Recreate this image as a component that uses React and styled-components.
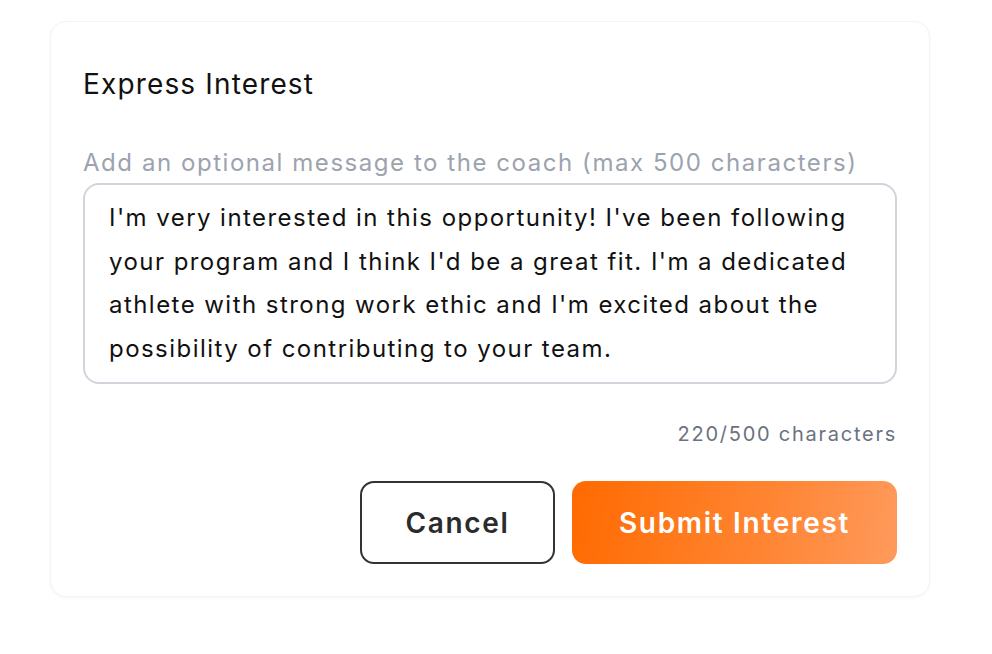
import React from "react";
import styled, { createGlobalStyle } from "styled-components";

const Global = createGlobalStyle`
  html, body { margin: 0; padding: 0; background: #ffffff; }
  body { font-family: Inter, "Noto Sans", sans-serif; -webkit-font-smoothing: antialiased; }
  * { box-sizing: border-box; }
`;

const Page = styled.div`
  padding: 21px 62px 56px 50px;
`;

const Card = styled.div`
  width: 880px;
  background: #ffffff;
  border: 1px solid #f3f4f6;
  border-radius: 16px;
  box-shadow: 0 1px 3px rgba(0, 0, 0, 0.04);
  padding: 44px 32px 32px 32px;
  display: flex;
  flex-direction: column;
`;

const Title = styled.h2`
  margin: 0;
  font-size: 28px;
  font-weight: 400;
  color: #111111;
  line-height: 36px;
  letter-spacing: 1.15px;
`;

const Label = styled.label`
  margin-top: 45px;
  font-size: 24px;
  color: #9ca3af;
  line-height: 32px;
  letter-spacing: 1.55px;
`;

const TextArea = styled.div`
  margin-top: 4px;
  border: 2px solid #d1d5db;
  border-radius: 16px;
  padding: 11px 24px 12px 24px;
  font-size: 24px;
  line-height: 43.5px;
  color: #111111;
  letter-spacing: 1.45px;
  height: 201px;
`;

const Counter = styled.div`
  margin-top: 36px;
  text-align: right;
  font-size: 20px;
  color: #6b7280;
  line-height: 28px;
  letter-spacing: 1.75px;
`;

const Actions = styled.div`
  margin-top: 33px;
  display: flex;
  justify-content: flex-end;
  gap: 17px;
`;

const Button = styled.button`
  height: 83px;
  border-radius: 14px;
  font-family: Inter, "Noto Sans", sans-serif;
  font-size: 28px;
  font-weight: 600;
  cursor: pointer;
  padding: 0;
  letter-spacing: 1.7px;
  width: ${(p) => p.$width}px;
  ${(p) =>
    p.$primary
      ? `
    border: none;
    color: #ffffff;
    background: linear-gradient(100deg, #ff6a00 0%, #ff8533 60%, #ff9a5c 100%);
  `
      : `
    border: 2px solid #333333;
    color: #2b2b2b;
    background: #ffffff;
  `}
`;

export default function App() {
  return (
    <>
      <Global />
      <Page>
        <Card>
          <Title>Express Interest</Title>
          <Label>Add an optional message to the coach (max 500 characters)</Label>
          <TextArea>
            I'm very interested in this opportunity! I've been following your program and I
            think I'd be a great fit. I'm a dedicated athlete with strong work ethic and I'm
            excited about the possibility of contributing to your team.
          </TextArea>
          <Counter>220/500 characters</Counter>
          <Actions>
            <Button $width={195}>Cancel</Button>
            <Button $primary $width={325}>Submit Interest</Button>
          </Actions>
        </Card>
      </Page>
    </>
  );
}
